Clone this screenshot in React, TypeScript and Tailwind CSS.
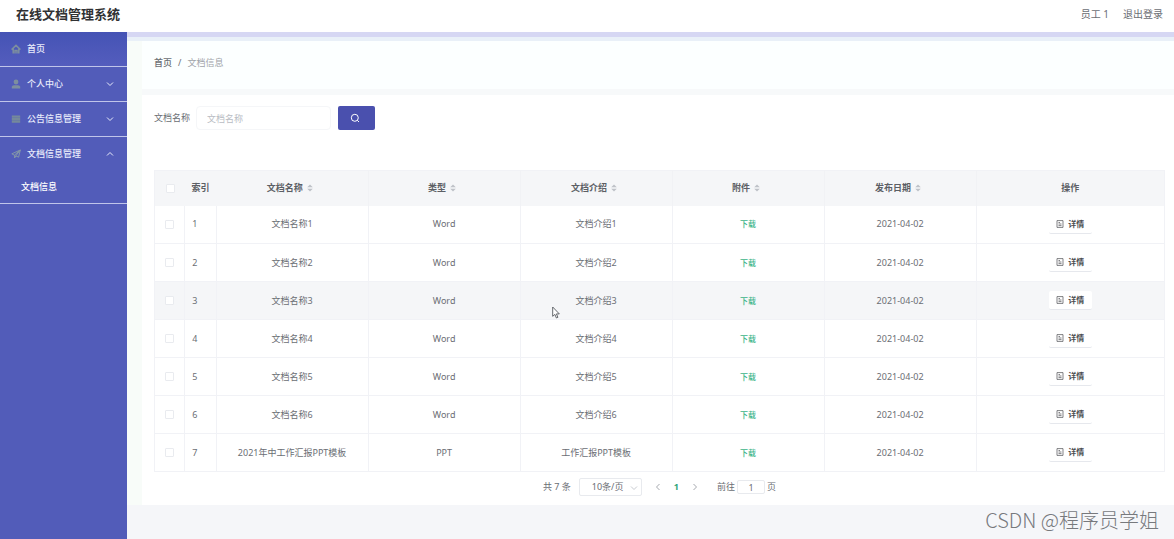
import React, { useState } from 'react';
import clsx from 'clsx';

const COLUMNS = ['文档名称', '类型', '文档介绍', '附件', '发布日期'];

const DOCS = [
  { id: 1, name: '文档名称1', type: 'Word', intro: '文档介绍1', date: '2021-04-02' },
  { id: 2, name: '文档名称2', type: 'Word', intro: '文档介绍2', date: '2021-04-02' },
  { id: 3, name: '文档名称3', type: 'Word', intro: '文档介绍3', date: '2021-04-02' },
  { id: 4, name: '文档名称4', type: 'Word', intro: '文档介绍4', date: '2021-04-02' },
  { id: 5, name: '文档名称5', type: 'Word', intro: '文档介绍5', date: '2021-04-02' },
  { id: 6, name: '文档名称6', type: 'Word', intro: '文档介绍6', date: '2021-04-02' },
  { id: 7, name: '2021年中工作汇报PPT模板', type: 'PPT', intro: '工作汇报PPT模板', date: '2021-04-02' },
];

const Chevron = ({ className }: { className?: string }) => (
  <svg viewBox="0 0 8 8" className={clsx('size-2', className)} fill="none" stroke="currentColor">
    <path d="M1 2.5 4 5.5 7 2.5" />
  </svg>
);

const HomeIcon = () => (
  <svg viewBox="0 0 10 10" className="size-2.5" fill="none" stroke="#7d8f9f" strokeWidth="1.5">
    <path d="M.6 5.6 5 1.4 9.4 5.6M2.2 4.6V9.4M7.8 4.6V9.4M4 9.4V6.4H6V9.4" />
  </svg>
);

const UserIcon = () => (
  <svg viewBox="0 0 10 10" className="size-2.5" fill="#7d8f9f">
    <circle cx="5" cy="3" r="2.4" />
    <path d="M.8 9.4V7.8Q1 6.2 3 6.2H7Q9 6.2 9.2 7.8V9.4Z" />
  </svg>
);

const ListIcon = () => (
  <svg viewBox="0 0 10 10" className="size-2.5" fill="#75899b">
    <path d="M.8 1.4H9.2V3.7H.8ZM.8 4.1H9.2V6.2H.8ZM.8 6.6H9.2V8.8H.8Z" />
  </svg>
);

const PlaneIcon = () => (
  <svg viewBox="0 0 10 10" className="size-2.5" fill="none" stroke="#8497a8">
    <path d="M9.3 1 .8 4.8 3.4 6.2 9.3 1 7.6 8.2 4.8 6.9 3.6 9V6.2M4.8 6.9 9.3 1" />
  </svg>
);

const DocIcon = () => (
  <svg viewBox="0 0 8 8" className="size-2" fill="none" stroke="currentColor" strokeWidth=".7">
    <path d="M1 .6H7V7.4H1ZM2.5 2.5H4M2.5 4H5.5M2.5 5.6H5.5" />
  </svg>
);

const SortIcon = () => (
  <svg viewBox="0 0 6 8" className="h-2 w-1.5" fill="#bfc2c8">
    <path d="M3 .4 5.8 3.3H.2ZM3 7.6 .2 4.7H5.8Z" />
  </svg>
);

const MenuItem = ({ icon, label, arrow }: { icon: React.ReactNode; label: string; arrow?: 'up' | 'down' }) => (
  <button type="button" className="flex h-[34px] w-full items-center gap-1.5 px-[11px] text-left font-medium">
    {icon}
    <span className="flex-1">{label}</span>
    {arrow && <Chevron className={clsx('mr-0.5', arrow === 'up' && 'rotate-180')} />}
  </button>
);

const Sidebar = () => (
  <nav className="w-[127px] shrink-0 bg-[#525cb9] text-[#e8ebfb]">
    <ul>
      <li className="border-b border-[#c0c5ea] bg-linear-to-b from-[#4553b5] to-[#545dbd]">
        <MenuItem icon={<HomeIcon />} label="首页" />
      </li>
      <li className="border-b border-[#c0c5ea]">
        <MenuItem icon={<UserIcon />} label="个人中心" arrow="down" />
      </li>
      <li className="border-b border-[#c0c5ea]">
        <MenuItem icon={<ListIcon />} label="公告信息管理" arrow="down" />
      </li>
      <li className="border-b border-[#c0c5ea]">
        <MenuItem icon={<PlaneIcon />} label="文档信息管理" arrow="up" />
        <a href="#docs" className="flex h-8 items-center pl-[21px] font-medium text-white">文档信息</a>
      </li>
    </ul>
  </nav>
);

const Check = ({ label }: { label: string }) => (
  <input
    type="checkbox"
    aria-label={label}
    className="block size-[9px] appearance-none rounded-[1px] border border-[#e9ebef] bg-white checked:bg-[#4a52b0]"
  />
);

const DocTable = () => (
  <table className="w-full table-fixed border-collapse border border-[#f1f2f6] text-center">
    <colgroup>
      <col className="w-[3%]" />
      <col className="w-[3.1%]" />
      <col className="w-[15.05%]" />
      <col className="w-[15.05%]" />
      <col className="w-[15.05%]" />
      <col className="w-[15.05%]" />
      <col className="w-[15.05%]" />
      <col />
    </colgroup>
    <thead className="bg-[#f5f6f8] text-[#5c5f65]">
      <tr className="h-[35px]">
        <th className="pl-[11px]"><Check label="全选" /></th>
        <th className="font-bold">索引</th>
        {COLUMNS.map((title) => (
          <th key={title} className="border-r border-[#f1f2f5] pr-1 font-bold">
            <button type="button" className="inline-flex items-center gap-1">
              {title}
              <SortIcon />
            </button>
          </th>
        ))}
        <th className="font-bold">操作</th>
      </tr>
    </thead>
    <tbody>
      {DOCS.map((doc) => (
        <tr
          key={doc.id}
          className={clsx('h-[38px] border-b border-[#f1f2f6] *:border-r *:border-[#f1f2f6]', doc.id === 3 && 'bg-[#f5f6f8]')}
        >
          <td className="pl-2.5"><Check label={doc.name} /></td>
          <td className="pl-[7px] text-left">{doc.id}</td>
          <td>{doc.name}</td>
          <td>{doc.type}</td>
          <td>{doc.intro}</td>
          <td><a href="#download" className="text-[8px] font-medium text-[#3cb489]">下载</a></td>
          <td>{doc.date}</td>
          <td>
            <button
              type="button"
              className="inline-flex h-[19px] w-[43px] items-center justify-center gap-1 rounded-xs border-b border-[#e6e8ed] bg-white text-[8px] font-bold text-[#4a4c50]"
            >
              <DocIcon />
              详情
            </button>
          </td>
        </tr>
      ))}
    </tbody>
  </table>
);

const Pagination = () => {
  const [page, setPage] = useState('1');
  return (
    <div className="mt-1.5 flex h-[18px] items-center justify-center">
      <span>共 7 条</span>
      <div className="relative ml-2">
        <select aria-label="每页条数" className="h-[18px] w-[63px] appearance-none rounded-xs border border-[#e8eaee] bg-white pl-3">
          <option>10条/页</option>
        </select>
        <Chevron className="pointer-events-none absolute top-1.5 right-1 text-[#c8cbd1]" />
      </div>
      <button type="button" aria-label="上一页" className="ml-3"><Chevron className="rotate-90 text-[#a5a8ae]" /></button>
      <button type="button" className="ml-3 font-bold text-[#2fa67a]">1</button>
      <button type="button" aria-label="下一页" className="ml-3"><Chevron className="-rotate-90 text-[#a5a8ae]" /></button>
      <label htmlFor="page" className="ml-[18px]">前往</label>
      <input
        id="page"
        value={page}
        onChange={(e) => setPage(e.target.value)}
        className="mx-0.5 h-3.5 w-7 rounded-xs border border-[#e8eaee] text-center"
      />
      <span>页</span>
    </div>
  );
};

export default function App() {
  return (
    <div className="relative flex min-h-screen flex-col bg-[#f5f6f9] font-['Noto_Sans','Noto_Sans_CJK_SC',sans-serif] text-[9px] leading-3 text-[#6b6e74]">
      <header className="flex h-8 items-center justify-between bg-white pr-[11px] pl-4 pb-1">
        <h1 className="text-[13px] leading-5 font-bold text-[#303133]">在线文档管理系统</h1>
        <div className="flex gap-3.5 text-[10px]">
          <span>员工 1</span>
          <a href="#logout">退出登录</a>
        </div>
      </header>
      <div className="flex flex-1">
        <Sidebar />
        <main className="flex-1 border-t-[5px] border-[#d6d7f3]">
          <div className="h-1 bg-[#e9f0f8]" />
          <div className="bg-[#f8fcf9] pl-[15px]">
            <nav className="flex h-12 items-center gap-1.5 bg-[#fcffff] px-3 pb-1">
              <a href="#home" className="font-medium">首页</a>
              <span>/</span>
              <span className="text-[#a0a3a9]">文档信息</span>
            </nav>
            <div className="h-1.5 bg-[#f7f9fa]" />
            <section className="bg-white pt-[11px] pr-[9px] pb-[9px] pl-3">
              <form className="flex h-6 items-center" onSubmit={(e) => e.preventDefault()}>
                <label htmlFor="name">文档名称</label>
                <input
                  id="name"
                  placeholder="文档名称"
                  className="ml-1.5 h-6 w-[135px] rounded-sm border border-[#f5f6f8] px-2.5 placeholder:text-[#b9bcc3]"
                />
                <button type="submit" aria-label="搜索" className="ml-[7px] flex h-6 w-[37px] items-center justify-center rounded-xs bg-[#4a50ae] pr-1 text-white">
                  <svg viewBox="0 0 10 10" className="size-2.5" fill="none" stroke="currentColor">
                    <circle cx="4.8" cy="4.8" r="3.5" />
                    <path d="M7.3 7.3 9 9" />
                  </svg>
                </button>
              </form>
              <div className="mt-10">
                <DocTable />
                <Pagination />
              </div>
            </section>
          </div>
        </main>
      </div>
      <svg viewBox="0 0 8 13" className="absolute top-[306px] left-[552px] h-[13px] w-2" fill="white" stroke="#55585e" strokeWidth=".9">
        <path d="M.7 1V10.3L2.9 8.4 4.4 12 5.9 11.3 4.4 7.9H7.3Z" />
      </svg>
      <p className="absolute right-[15px] bottom-[7px] font-['Noto_Sans_CJK_SC',sans-serif] text-xl leading-6 font-light text-[#77797d]">
        CSDN @程序员学姐
      </p>
    </div>
  );
}
